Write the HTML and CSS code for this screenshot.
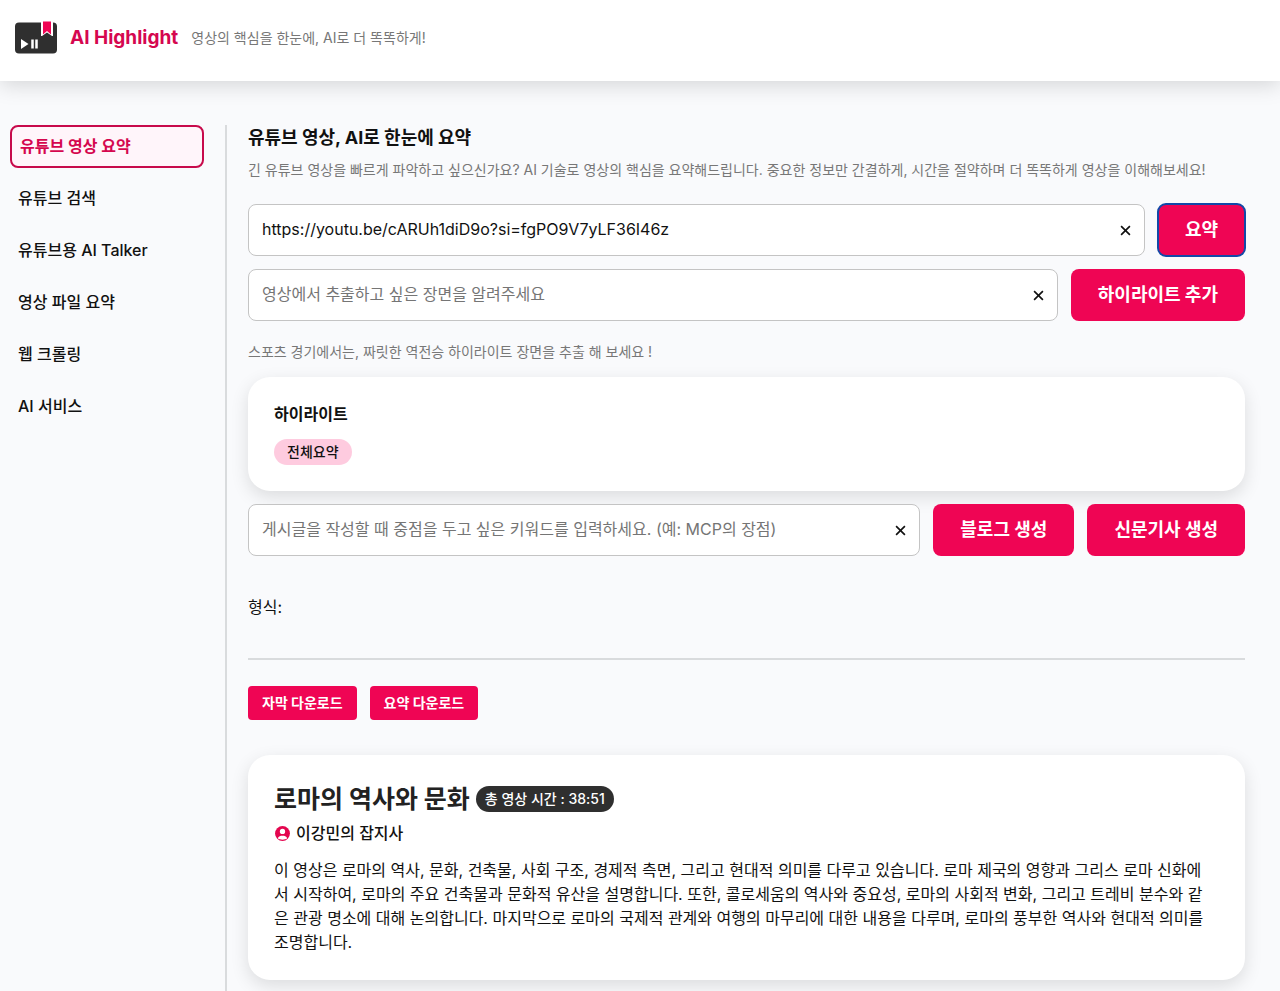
FILE: index.html
```html
<!DOCTYPE html>
<html lang="ko">
<head>
  <meta charset="UTF-8">
  <meta name="viewport" content="width=device-width, initial-scale=1">
  <title>AI Highlight</title>
  <link rel="stylesheet" href="styles.css">
</head>
<body>

  <!-- HEADER -->
  <header class="header">
    <svg class="logo" viewBox="0 0 44 34" aria-hidden="true">
      <rect x="1" y="2" width="42" height="31" rx="4" fill="#2f2f2f"/>
      <path d="M27 1H39V15.500H38L33 12L28 15.500H27Z" fill="#fff"/>
      <path d="M29 1H37V14L33 10.500L29 14Z" fill="#f00554"/>
      <path d="M7 18.500V28.500L14.500 23.500Z" fill="#fff"/>
      <path d="M18.500 19V28M22.500 19V28" stroke="#fff" stroke-width="2.500"/>
    </svg>
    <h1 class="brand">AI Highlight</h1>
    <p class="slogan">영상의 핵심을 한눈에, AI로 더 똑똑하게!</p>
  </header>

  <div class="layout">

    <!-- MENU -->
    <nav class="sidebar">
      <ul class="menu">
        <li><a class="menu-link active" href="#">유튜브 영상 요약</a></li>
        <li><a class="menu-link" href="#">유튜브 검색</a></li>
        <li><a class="menu-link" href="#">유튜브용 AI Talker</a></li>
        <li><a class="menu-link" href="#">영상 파일 요약</a></li>
        <li><a class="menu-link" href="#">웹 크롤링</a></li>
        <li><a class="menu-link" href="#">AI 서비스</a></li>
      </ul>
    </nav>

    <!-- CONTENT -->
    <main class="content">
      <h2 class="page-title">유튜브 영상, AI로 한눈에 요약</h2>
      <p class="page-desc">긴 유튜브 영상을 빠르게 파악하고 싶으신가요? AI 기술로 영상의 핵심을 요약해드립니다. 중요한 정보만 간결하게, 시간을 절약하며 더 똑똑하게 영상을 이해해보세요!</p>

      <form class="row">
        <div class="field">
          <input class="input" type="text" aria-label="유튜브 주소" value="https://youtu.be/cARUh1diD9o?si=fgPO9V7yLF36I46z">
          <button class="clear" type="button" aria-label="지우기"><svg viewBox="0 0 10 10"><path d="M1 1L9 9M9 1L1 9"/></svg></button>
        </div>
        <button class="btn focused" type="button">요약</button>
      </form>

      <form class="row">
        <div class="field">
          <input class="input" type="text" aria-label="추출할 장면" placeholder="영상에서 추출하고 싶은 장면을 알려주세요">
          <button class="clear" type="button" aria-label="지우기"><svg viewBox="0 0 10 10"><path d="M1 1L9 9M9 1L1 9"/></svg></button>
        </div>
        <button class="btn" type="button">하이라이트 추가</button>
      </form>

      <p class="hint">스포츠 경기에서는, 짜릿한 역전승 하이라이트 장면을 추출 해 보세요 !</p>

      <section class="card">
        <h3 class="card-title">하이라이트</h3>
        <span class="tag">전체요약</span>
      </section>

      <form class="row">
        <div class="field">
          <input class="input" type="text" aria-label="키워드" placeholder="게시글을 작성할 때 중점을 두고 싶은 키워드를 입력하세요. (예: MCP의 장점)">
          <button class="clear" type="button" aria-label="지우기"><svg viewBox="0 0 10 10"><path d="M1 1L9 9M9 1L1 9"/></svg></button>
        </div>
        <button class="btn" type="button">블로그 생성</button>
        <button class="btn" type="button">신문기사 생성</button>
      </form>

      <p class="format">형식:</p>

      <div class="downloads">
        <button class="btn-small" type="button">자막 다운로드</button>
        <button class="btn-small" type="button">요약 다운로드</button>
      </div>

      <article class="card">
        <div class="video-head">
          <h2 class="video-title">로마의 역사와 문화</h2>
          <span class="duration">총 영상 시간 : 38:51</span>
        </div>
        <p class="channel">
          <svg class="channel-icon" viewBox="0 0 16 16" aria-hidden="true">
            <circle cx="8" cy="8" r="7" fill="#e4064f"/>
            <circle cx="8" cy="6" r="2.500" fill="#fff"/>
            <path d="M3.500 12.500C4.500 10.500 6 10 8 10S11.500 10.500 12.500 12.500C10 14.300 6 14.300 3.500 12.500Z" fill="#fff"/>
          </svg>
          이강민의 잡지사
        </p>
        <p class="summary">이 영상은 로마의 역사, 문화, 건축물, 사회 구조, 경제적 측면, 그리고 현대적 의미를 다루고 있습니다. 로마 제국의 영향과 그리스 로마 신화에<br>서 시작하여, 로마의 주요 건축물과 문화적 유산을 설명합니다. 또한, 콜로세움의 역사와 중요성, 로마의 사회적 변화, 그리고 트레비 분수와 같<br>은 관광 명소에 대해 논의합니다. 마지막으로 로마의 국제적 관계와 여행의 마무리에 대한 내용을 다루며, 로마의 풍부한 역사와 현대적 의미를<br>조명합니다.</p>
      </article>
    </main>
  </div>

</body>
</html>
```
FILE: styles.css
```css
* {box-sizing:border-box; margin:0; padding:0;}
body {
  display:flex; flex-direction:column; min-height:100vh;
  font-family:Inter,'Noto Sans CJK KR',sans-serif;
  font-size:16px; line-height:24px;
  background:#f9fafc; color:#111;
}
a {text-decoration:none; color:inherit;}
button, input {font-family:inherit;}
button {border:none; cursor:pointer;}

.header {
  display:flex; align-items:center;
  padding:20px 14px 26px; background:#fff;
  box-shadow:0 4px 20px rgba(0,0,0,.15);
}
.logo {width:44px; height:35px; margin-right:12px;}
.brand {font-size:19px; font-weight:700; color:#d5074f; margin-right:13px;}
.slogan {font-size:14px; color:#777;}

.layout {display:flex; flex:1; padding:44px 35px 0 10px;}

.sidebar {
  flex:0 0 217px; padding-right:21px;
  border-right:2px solid #d9dbdd;
}
.menu {display:flex; flex-direction:column; gap:9px; list-style:none;}
.menu-link {
  display:flex; align-items:center; height:43px;
  padding:0 8px 2px; border-radius:8px; font-weight:500;
}
.menu-link.active {
  border:2px solid #c70a4b; background:#fff5fa;
  color:#d5074f; font-weight:700;
}

.content {flex:1; min-width:0; padding:0 0 24px 21px;}
.page-title {font-size:18px; font-weight:700; line-height:26px; margin-bottom:7px;}
.page-desc {font-size:14px; color:#777; margin-bottom:22px;}

.row {display:flex; gap:13px; margin-bottom:13px;}
.field {position:relative; flex:1;}
.input {
  display:block; width:100%; height:52px; padding:0 44px 2px 13px;
  font-size:16px; color:#111; background:#fff;
  border:1px solid #c4c4c4; border-radius:8px;
}
.input::placeholder {color:#757575; opacity:1;}
.clear {
  position:absolute; right:14px; top:21px;
  width:11px; height:11px; background:none;
}
.clear svg {
  display:block; width:11px; height:11px;
  fill:none; stroke:#111; stroke-width:1.5;
}
.btn {
  height:52px; padding:0 27px 4px; border-radius:8px;
  background:#ef0554; color:#fff; font-size:18px; font-weight:700;
}
.btn.focused {outline:2px solid #1249a8; outline-offset:-1px;}

.hint {font-size:14px; color:#777; margin:19px 0 13px;}

.card {
  padding:26px; margin-bottom:13px;
  background:#fff; border-radius:22px;
  box-shadow:0 6px 18px rgba(0,0,0,.12);
}
.card-title {font-size:16px; font-weight:700; line-height:22px; margin-bottom:14px;}
.tag {
  display:block; width:fit-content; padding:0 13px; border-radius:13px;
  background:#fecbdf; font-size:14px; font-weight:500; line-height:26px;
}

.format {padding:26px 0 39px; border-bottom:2px solid #d9dbdd;}
.row + .format {margin-top:13px;}
.row:has(+ .format) {margin-bottom:0;}

.downloads {display:flex; gap:13px; margin:26px 0 35px;}
.btn-small {
  height:34px; padding:0 14px 3px; border-radius:4px;
  background:#ef0554; color:#fff; font-size:14px; font-weight:700;
}

.video-head {display:flex; align-items:center; gap:6px; margin-bottom:4px;}
.video-title {font-size:25px; font-weight:700; line-height:36px; color:#222;}
.duration {
  padding:0 9px; border-radius:13px; background:#2f2f2f; color:#fff;
  font-size:14px; font-weight:500; line-height:26px;
}
.channel {display:flex; align-items:center; gap:5px; font-weight:500; margin-bottom:13px;}
.channel-icon {width:17px; height:17px;}
```
